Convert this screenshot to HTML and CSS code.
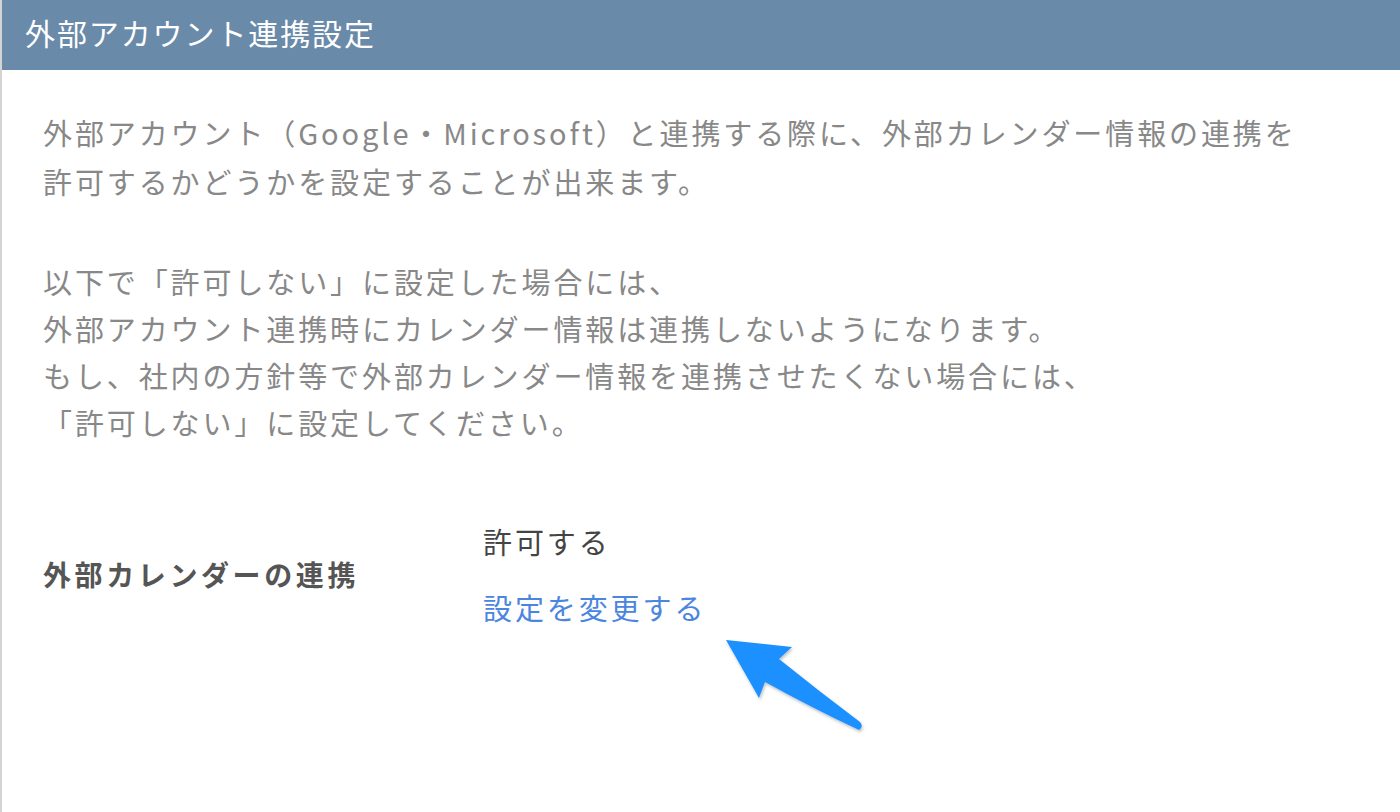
FILE: index.html
```html
<!DOCTYPE html>
<html lang="ja">
<head>
<meta charset="utf-8">
<title>外部アカウント連携設定</title>
<link rel="stylesheet" href="styles.css">
</head>
<body>
<div class="panel">
  <div class="panel-header">外部アカウント連携設定</div>
  <div class="panel-body">
    <p class="desc">外部アカウント（Google・Microsoft）と連携する際に、外部カレンダー情報の連携を<br>許可するかどうかを設定することが出来ます。</p>
    <p class="desc desc-second">以下で「許可しない」に設定した場合には、<br>外部アカウント連携時にカレンダー情報は連携しないようになります。<br>もし、社内の方針等で外部カレンダー情報を連携させたくない場合には、<br>「許可しない」に設定してください。</p>
    <div class="setting-row">
      <div class="setting-label">外部カレンダーの連携</div>
      <div class="setting-value">
        <div class="value-text">許可する</div>
        <a class="change-link" href="#">設定を変更する</a>
      </div>
    </div>
  </div>
  <svg class="annot-arrow" width="200" height="140" viewBox="680 620 200 140" aria-hidden="true">
    <defs>
      <filter id="sh" x="-20%" y="-20%" width="140%" height="140%">
        <feDropShadow dx="1" dy="2" stdDeviation="1.5" flood-color="#000" flood-opacity="0.25"/>
      </filter>
    </defs>
    <path d="M726 640 L792 647 L779 659 Q820 692 860 722 Q864 727 859 730 Q812 708 765 682 L759 698 Z" fill="#1e90ff" filter="url(#sh)"/>
  </svg>
</div>
</body>
</html>
```

FILE: styles.css
```css
html, body {
  margin: 0;
  padding: 0;
  background: #ffffff;
}
body {
  font-family: "Noto Sans CJK JP", "Noto Sans", sans-serif;
}
.panel {
  position: relative;
  width: 1400px;
  height: 812px;
  box-sizing: border-box;
  border-left: 2px solid #d4d4d4;
  overflow: hidden;
}
.panel-header {
  height: 70px;
  background: #6a8aaa;
  color: #ffffff;
  font-size: 30px;
  line-height: 64px;
  letter-spacing: 1.9px;
  padding-left: 23px;
}
.panel-body {
  padding: 38px 0 0 41px;
}
.desc {
  margin: 0;
  font-size: 29px;
  line-height: 49px;
  letter-spacing: 2.9px;
  color: #888888;
}
.desc-second {
  margin-top: 52px;
  line-height: 47px;
}
.setting-row {
  display: flex;
  align-items: center;
  margin-top: 72px;
}
.setting-label {
  width: 440px;
  font-size: 28px;
  font-weight: bold;
  color: #555555;
  letter-spacing: 3.6px;
}
.setting-value {
  display: flex;
  flex-direction: column;
  gap: 20px;
}
.value-text {
  font-size: 29px;
  line-height: 46px;
  color: #444444;
  letter-spacing: 2.9px;
}
.change-link {
  font-size: 29px;
  line-height: 46px;
  color: #4a86e0;
  text-decoration: none;
  letter-spacing: 2.9px;
}
.annot-arrow {
  position: absolute;
  left: 678px;
  top: 620px;
}
```
